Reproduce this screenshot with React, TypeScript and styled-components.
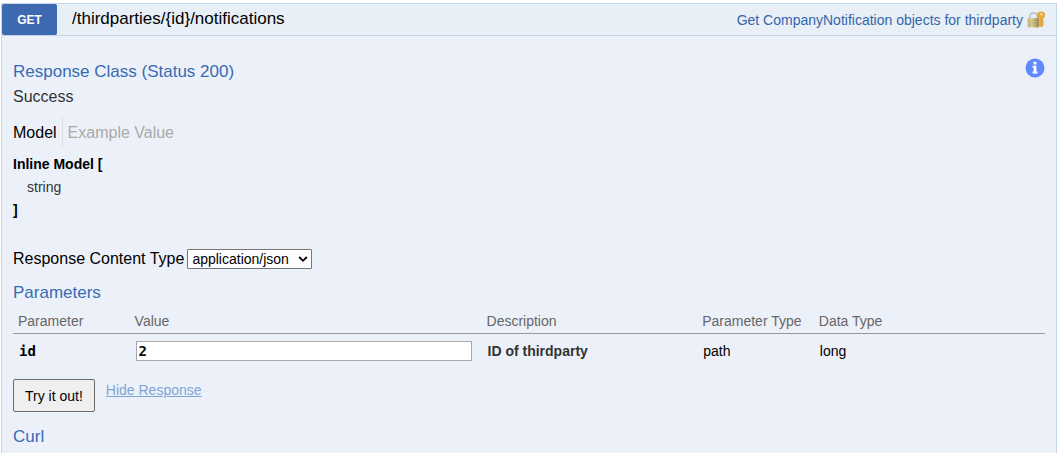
import React from "react";
import styled, { createGlobalStyle } from "styled-components";

const GlobalStyle = createGlobalStyle`
  *, *::before, *::after { box-sizing: border-box; }
  body {
    margin: 0;
    background: #fff;
    color: #000;
    font-family: "Liberation Sans", Arial, Helvetica, sans-serif;
    font-size: 14px;
  }
`;

const Page = styled.main`
  display: flex;
  min-height: 100vh;
  padding: 3px 4px 0 1px;
`;

const Operation = styled.section`
  flex: 1;
  display: flex;
  flex-direction: column;
  border: 1px solid #c5d6ea;
  border-bottom: 0;
  background: #ecf1f9;
`;

const Heading = styled.header`
  display: flex;
  align-items: center;
  height: 32px;
  padding-right: 11px;
  background: #e8eff7;
  border-bottom: 1px solid #c5d6ea;
`;

const Method = styled.span`
  align-self: stretch;
  width: 55px;
  border-radius: 2px;
  background: #3d69b0;
  color: #fff;
  font-size: 12px;
  font-weight: 700;
  line-height: 32px;
  text-align: center;
`;

const Path = styled.h1`
  flex: 1;
  margin: 0 0 2px 15px;
  font-size: 17px;
  font-weight: 400;
  line-height: 20px;
`;

const Summary = styled.a`
  margin-right: 4px;
  color: #3565ac;
  font-size: 14px;
  text-decoration: none;
`;

const IconButton = styled.button`
  display: block;
  padding: 0;
  border: 0;
  background: none;
  line-height: 0;
`;

const Content = styled.div`
  padding: 22px 11px 2px;
`;

const TitleRow = styled.div`
  display: flex;
  justify-content: space-between;
  align-items: flex-start;
`;

const Title = styled.h2`
  margin: 0;
  color: #3a6ab3;
  font-size: 17px;
  font-weight: 400;
  line-height: 28px;
`;

const Status = styled.p`
  margin: 0;
  color: #333;
  font-size: 16px;
  line-height: 22px;
`;

const Tabs = styled.nav`
  display: flex;
  margin-top: 10px;
`;

const Tab = styled.button<{ $active?: boolean }>`
  height: 29px;
  padding: 0 5px;
  border: 0;
  border-left: 1px solid #ddd;
  background: none;
  color: ${(p) => (p.$active ? "#000" : "#aaa")};
  font: 16px/28px "Liberation Sans", Arial, sans-serif;

  &:first-child {
    padding-left: 0;
    border-left: 0;
  }
`;

const Signature = styled.div`
  margin-top: 6px;
  font-weight: 700;
  line-height: 23px;
`;

const SignatureItem = styled.div`
  padding-left: 14px;
  color: #333;
  font-weight: 400;
`;

const ContentType = styled.div`
  display: flex;
  align-items: center;
  gap: 3px;
  margin: 27px 0 10px;
  font-size: 16px;
`;

const SelectBox = styled.span`
  position: relative;
  display: inline-flex;
  align-items: center;
`;

const Select = styled.select`
  appearance: none;
  height: 20px;
  padding: 0 22px 0 4px;
  border: 1px solid #767676;
  border-radius: 1px;
  background: #fff;
  color: #000;
  font: 14px/18px "Liberation Sans", Arial, sans-serif;
`;

const Chevron = styled.svg`
  position: absolute;
  right: 4px;
  pointer-events: none;
`;

const Table = styled.table`
  width: 100%;
  border-collapse: collapse;
  table-layout: fixed;
`;

const HeadCell = styled.th<{ $width?: string }>`
  width: ${(p) => p.$width ?? "auto"};
  height: 26px;
  padding: 2px 5px 0;
  border-bottom: 1px solid #999;
  color: #666;
  font-weight: 400;
  line-height: 20px;
  text-align: left;
  white-space: nowrap;
`;

const Cell = styled.td<{ $strong?: boolean }>`
  height: 36px;
  padding: 0 6px;
  color: ${(p) => (p.$strong ? "#333" : "#000")};
  font-weight: ${(p) => (p.$strong ? 700 : 400)};
`;

const ParamName = styled.label`
  font: 700 14px "DejaVu Sans Mono", monospace;
`;

const ValueInput = styled.input`
  display: block;
  width: 100%;
  max-width: 336px;
  height: 20px;
  padding: 0 2px;
  border: 1px solid #aaa;
  border-radius: 0;
  background: #fff;
  color: #000;
  font: 700 14px "DejaVu Sans Mono", monospace;
`;

const Actions = styled.div`
  display: flex;
  align-items: flex-start;
  gap: 11px;
  margin: 10px 0 11px;
`;

const SubmitButton = styled.button`
  height: 33px;
  padding: 0 11px;
  border: 1px solid #6b6b6b;
  border-radius: 2px;
  background: #efefef;
  color: #000;
  font: 14px "Liberation Sans", Arial, sans-serif;
`;

const HideLink = styled.a`
  padding-top: 1px;
  color: #7fa5d6;
  line-height: 20px;
`;

const LockIcon = () => (
  <svg width="18" height="18" viewBox="0 0 18 18" aria-hidden="true">
    <defs>
      <linearGradient id="lock-body" x1="0" x2="1" y1="0" y2="0">
        <stop offset="0" stopColor="#c9b978" />
        <stop offset=".35" stopColor="#e0d4a0" />
        <stop offset="1" stopColor="#9c8841" />
      </linearGradient>
    </defs>
    <path d="M2.9 8V5.2A3.7 3.7 0 0 1 6.6 1.8a3.7 3.7 0 0 1 3.7 3.4V8" fill="none" stroke="#c2c4c6" strokeWidth="1.8" />
    <rect x=".6" y="7" width="11.8" height="9.4" rx=".8" fill="url(#lock-body)" />
    <path d="M1 9.6h11M1 11.8h11M1 14h11" stroke="#9a8b52" strokeWidth=".5" opacity=".7" />
    <path
      d="M10.8 2.6 12.4 1h3.8l1.5 1.7v2.9l-1.9 1.9v7.3l-1.3 1.5-1.4-1.5V7.4l-2.3-1.9z"
      fill="#eaa937"
      stroke="#cf8d20"
      strokeWidth=".5"
    />
    <path d="M15.8 9.5h.8v1.6h-.8zM15.8 12.2h.8v1.5h-.8z" fill="#d89528" />
    <circle cx="14.4" cy="3.4" r="1.1" fill="#f8eed2" />
  </svg>
);

const InfoIcon = () => (
  <svg width="20" height="20" viewBox="0 0 20 20" aria-hidden="true">
    <circle cx="10" cy="10" r="9.5" fill="#5f8bfa" />
    <path d="M8.6 3.8h2.8v2.7H8.6zM7.6 7.8h3.8v5.8h1.1v2H7.6v-2h1.1V9.7H7.6z" fill="#fff" />
  </svg>
);

export default function App() {
  return (
    <>
      <GlobalStyle />
      <Page>
        <Operation>
          <Heading>
            <Method>GET</Method>
            <Path>/thirdparties/&#123;id&#125;/notifications</Path>
            <Summary href="#operation">Get CompanyNotification objects for thirdparty</Summary>
            <IconButton type="button" aria-label="Authorization">
              <LockIcon />
            </IconButton>
          </Heading>
          <Content>
            <TitleRow>
              <Title>Response Class (Status 200)</Title>
              <IconButton type="button" aria-label="Information">
                <InfoIcon />
              </IconButton>
            </TitleRow>
            <Status>Success</Status>
            <Tabs>
              <Tab type="button" $active>Model</Tab>
              <Tab type="button">Example Value</Tab>
            </Tabs>
            <Signature>
              <div>Inline Model [</div>
              <SignatureItem>string</SignatureItem>
              <div>]</div>
            </Signature>
            <ContentType>
              <label htmlFor="content-type">Response Content Type</label>
              <SelectBox>
                <Select id="content-type" defaultValue="application/json">
                  <option>application/json</option>
                </Select>
                <Chevron width="10" height="8" viewBox="0 0 10 8" aria-hidden="true">
                  <path d="M1.2 2 5 5.8 8.8 2" fill="none" stroke="#000" strokeWidth="1.8" />
                </Chevron>
              </SelectBox>
            </ContentType>
            <Title>Parameters</Title>
            <Table>
              <thead>
                <tr>
                  <HeadCell $width="11.3%">Parameter</HeadCell>
                  <HeadCell $width="34.1%">Value</HeadCell>
                  <HeadCell $width="20.9%">Description</HeadCell>
                  <HeadCell $width="11.3%">Parameter Type</HeadCell>
                  <HeadCell>Data Type</HeadCell>
                </tr>
              </thead>
              <tbody>
                <tr>
                  <Cell>
                    <ParamName htmlFor="param-id">id</ParamName>
                  </Cell>
                  <Cell>
                    <ValueInput id="param-id" type="text" defaultValue="2" />
                  </Cell>
                  <Cell $strong>ID of thirdparty</Cell>
                  <Cell>path</Cell>
                  <Cell>long</Cell>
                </tr>
              </tbody>
            </Table>
            <Actions>
              <SubmitButton type="button">Try it out!</SubmitButton>
              <HideLink href="#response">Hide Response</HideLink>
            </Actions>
            <Title>Curl</Title>
          </Content>
        </Operation>
      </Page>
    </>
  );
}
